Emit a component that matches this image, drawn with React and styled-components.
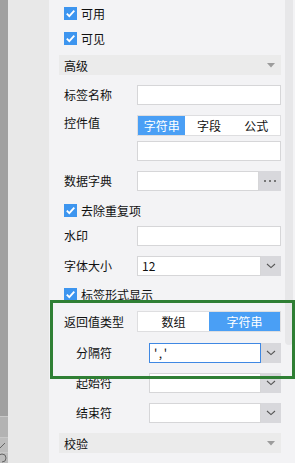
import React from "react";
import styled, { createGlobalStyle } from "styled-components";

const GlobalStyle = createGlobalStyle`
  html, body { margin: 0; padding: 0; width: 295px; height: 463px; overflow: hidden; }
  body {
    font-family: "Noto Sans CJK SC", "Noto Sans", sans-serif;
    font-size: 12px;
    color: #111;
    background: #f3f3f5;
  }
  * { box-sizing: border-box; }
`;

const Page = styled.div`
  position: relative;
  display: flex;
  width: 295px;
  height: 463px;
  overflow: hidden;
`;

const DockStrip = styled.div`
  width: 8px;
  display: flex;
  flex-direction: column;
  background: #a0a0a0;
`;

const DockFill = styled.div`
  flex: 1;
`;

const DockTool = styled.div`
  height: ${(p) => p.$h}px;
  background: ${(p) => p.$bg};
  border-top: 1px solid #c8c8c8;
  display: flex;
  align-items: center;
  overflow: hidden;
`;

const SideGap = styled.div`
  width: 41px;
  background: #e8e8e8;
`;

const Panel = styled.div`
  flex: 1;
  display: flex;
  background: #f3f3f5;
`;

const Content = styled.div`
  width: 222px;
  margin-left: 10px;
  display: flex;
  flex-direction: column;
`;

const ScrollTrack = styled.div`
  margin-left: 4px;
  width: 10px;
`;

const Thumb = styled.div`
  width: 8px;
  height: 345px;
  background: #e7e7e9;
  border-radius: 0 0 4px 4px;
`;

const Row = styled.div`
  display: flex;
  align-items: center;
  height: ${(p) => p.$h || 20}px;
  margin-top: ${(p) => p.$mt}px;
  flex-shrink: 0;
`;

const Label = styled.div`
  width: ${(p) => (p.$sub ? 90 : 78)}px;
  padding-left: ${(p) => (p.$sub ? 17 : 5)}px;
  white-space: nowrap;
  line-height: 16px;
  align-self: ${(p) => (p.$top ? "flex-start" : "center")};
`;

const Field = styled.div`
  flex: 1;
  display: flex;
  height: 100%;
  margin-left: ${(p) => p.$indent || 0}px;
`;

const TextBox = styled.div`
  flex: 1;
  height: 100%;
  background: #fff;
  border: 1px solid ${(p) => (p.$focus ? "#3f88e3" : "#d6d6d8")};
  padding-left: 4px;
  line-height: 18px;
  font-size: 12px;
  letter-spacing: ${(p) => p.$spacing || 0}px;
  white-space: nowrap;
`;

const SideButton = styled.div`
  width: ${(p) => p.$w || 20}px;
  height: 100%;
  background: #d8d8dc;
  display: flex;
  align-items: center;
  justify-content: center;
`;

const Segmented = styled.div`
  flex: 1;
  display: flex;
  height: 100%;
  background: #fff;
  border: 1px solid #dedee0;
`;

const Segment = styled.div`
  flex: 1;
  display: flex;
  align-items: center;
  justify-content: center;
  background: ${(p) => (p.$active ? "#4a9ff5" : "#fff")};
  color: ${(p) => (p.$active ? "#fff" : "#111")};
`;

const CheckRow = styled(Row)`
  padding-left: 5px;
  gap: 4px;
`;

const Header = styled(Row)`
  background: #ebebeb;
  padding: 0 6px 0 5px;
  justify-content: space-between;
`;

const Highlight = styled.div`
  position: absolute;
  left: 50px;
  top: 300px;
  width: 245px;
  height: 79px;
  border: 3px solid #2f7f34;
  pointer-events: none;
`;

const Check = () => (
  <svg width="13" height="13" viewBox="0 0 13 13">
    <rect width="13" height="13" fill="#3d95ef" />
    <path d="M2.8 6.6 L5.3 9.2 L10.3 3.6" fill="none" stroke="#fff" strokeWidth="1.8" />
  </svg>
);

const Caret = () => (
  <svg width="8" height="5" viewBox="0 0 8 5">
    <path d="M0 0 H8 L4 4.5 Z" fill="#9c9c9c" />
  </svg>
);

const Chevron = () => (
  <svg width="10" height="6" viewBox="0 0 10 6">
    <path d="M1 1 L5 4.6 L9 1" fill="none" stroke="#555" strokeWidth="1.1" />
  </svg>
);

const Dots = () => (
  <svg width="12" height="3" viewBox="0 0 12 3">
    <rect x="0" y="0" width="2" height="2" fill="#777" />
    <rect x="5" y="0" width="2" height="2" fill="#777" />
    <rect x="10" y="0" width="2" height="2" fill="#777" />
  </svg>
);

const CheckItem = ({ mt, children }) => (
  <CheckRow $mt={mt}>
    <Check />
    <span>{children}</span>
  </CheckRow>
);

const InputRow = ({ mt, label, sub, children }) => (
  <Row $mt={mt}>
    <Label $sub={sub}>{label}</Label>
    <Field>{children}</Field>
  </Row>
);

const Select = ({ value, focus, spacing }) => (
  <>
    <TextBox $focus={focus} $spacing={spacing}>{value}</TextBox>
    <SideButton>
      <Chevron />
    </SideButton>
  </>
);

export default function App() {
  return (
    <>
      <GlobalStyle />
      <Page>
        <DockStrip>
          <DockFill />
          <DockTool $h={21} $bg="#b3b3b3" />
          <DockTool $h={15} $bg="#bdbdbd">
            <svg width="8" height="12" viewBox="0 0 8 12">
              <path d="M0 9 L5 4" stroke="#666" strokeWidth="1" />
            </svg>
          </DockTool>
          <DockTool $h={11} $bg="#bdbdbd">
            <svg width="8" height="10" viewBox="0 0 8 10">
              <path d="M-2 5 A4 4 0 1 1 2 9" fill="none" stroke="#666" strokeWidth="1" />
            </svg>
          </DockTool>
        </DockStrip>
        <SideGap />
        <Panel>
          <Content>
            <CheckItem mt={3}>可用</CheckItem>
            <CheckItem mt={5}>可见</CheckItem>
            <Header $mt={7}>
              <span>高级</span>
              <Caret />
            </Header>
            <InputRow mt={10} label="标签名称">
              <TextBox />
            </InputRow>
            <Row $mt={10} $h={21}>
              <Label $top>控件值</Label>
              <Field>
                <Segmented>
                  <Segment $active>字符串</Segment>
                  <Segment>字段</Segment>
                  <Segment>公式</Segment>
                </Segmented>
              </Field>
            </Row>
            <Row $mt={5}>
              <Field $indent={78}>
                <TextBox />
              </Field>
            </Row>
            <InputRow mt={10} label="数据字典">
              <TextBox />
              <SideButton $w={22}>
                <Dots />
              </SideButton>
            </InputRow>
            <CheckItem mt={9}>去除重复项</CheckItem>
            <InputRow mt={6} label="水印">
              <TextBox />
            </InputRow>
            <InputRow mt={10} label="字体大小">
              <Select value="12" />
            </InputRow>
            <CheckItem mt={8}>标签形式显示</CheckItem>
            <Row $mt={7} $h={21}>
              <Label>返回值类型</Label>
              <Field>
                <Segmented>
                  <Segment>数组</Segment>
                  <Segment $active>字符串</Segment>
                </Segmented>
              </Field>
            </Row>
            <InputRow mt={11} label="分隔符" sub>
              <Select value="','" focus spacing={3} />
            </InputRow>
            <InputRow mt={10} label="起始符" sub>
              <Select value="" />
            </InputRow>
            <InputRow mt={10} label="结束符" sub>
              <Select value="" />
            </InputRow>
            <Header $mt={10}>
              <span>校验</span>
              <Caret />
            </Header>
          </Content>
          <ScrollTrack>
            <Thumb />
          </ScrollTrack>
        </Panel>
        <Highlight />
      </Page>
    </>
  );
}
